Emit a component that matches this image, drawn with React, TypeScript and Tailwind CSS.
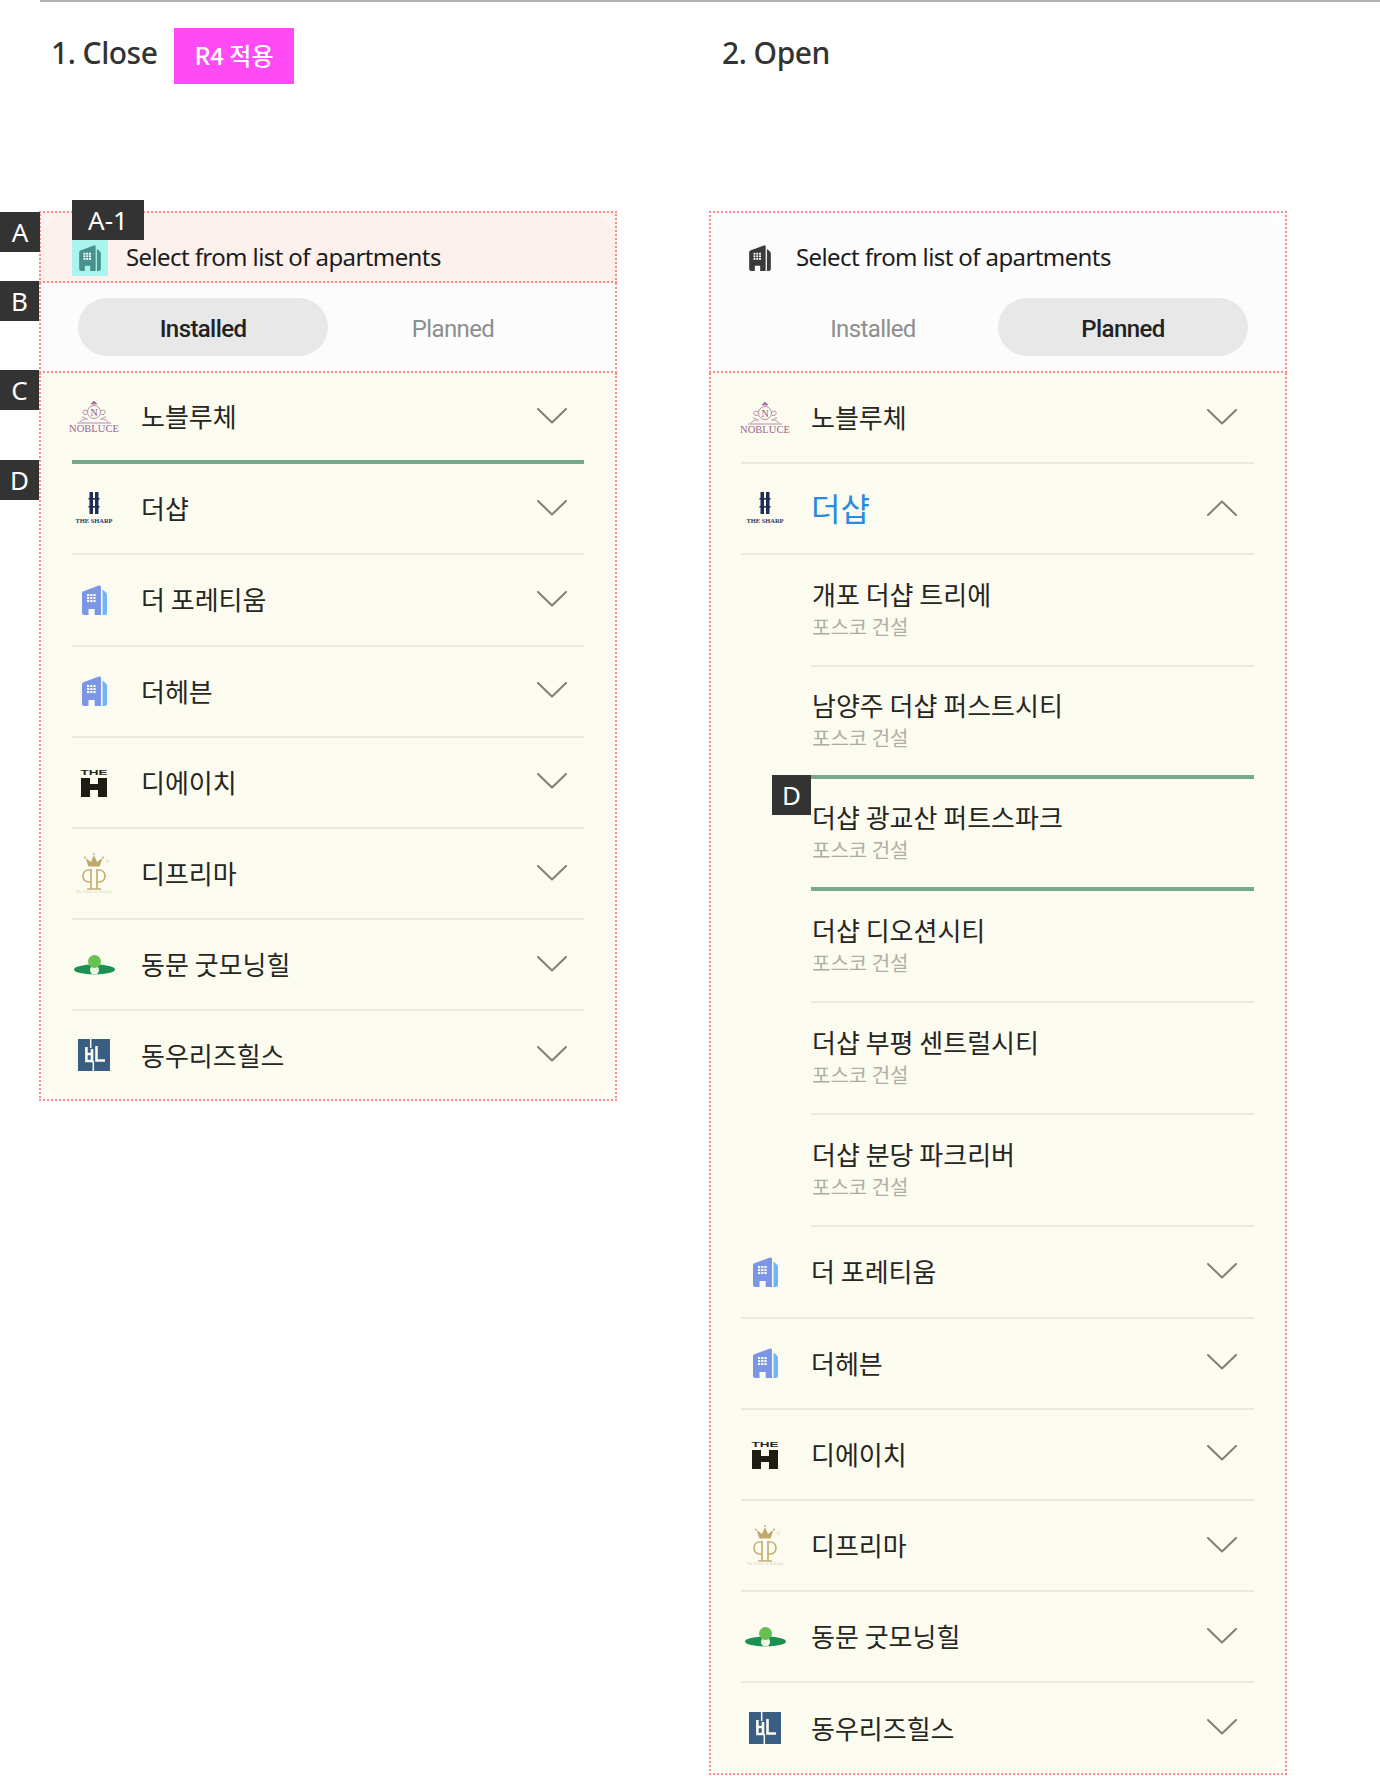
const korean = "font-['Noto_Sans_CJK_KR',sans-serif]";

function Building({ main, side, className }: { main: string; side: string; className?: string }) {
  return (
    <svg viewBox="0 0 25 30" className={className}>
      <path d="M0 8Q0 6.500 2 6L17 .5Q19 0 19 2V30H12.700V24H6.500V30H2.500Q0 30 0 27.500Z" fill={main} />
      <path d="M20.500 4.500L23.500 7Q25 8.200 25 10V27.500Q25 30 22.500 30H20.500Z" fill={side} />
      <g fill="#fff">
        {[0, 1, 2].map((r) =>
          [0, 1, 2].map((c) => <rect key={`${r}-${c}`} x={5 + c * 3.2} y={9 + r * 3} width="2.200" height="2.100" />)
        )}
      </g>
    </svg>
  );
}

function Nobluce() {
  return (
    <svg viewBox="0 0 52 34" className="w-[52px] h-[34px] shrink-0">
      <g fill="none" stroke="#a4719c" strokeWidth="0.8">
        <path d="M26 1l3 3h-6z" fill="#a4719c" />
        <circle cx="26" cy="12" r="6.500" />
        <path d="M19 11c-3-2-5 0-4 2s3 2 4 1M33 11c3-2 5 0 4 2s-3 2-4 1M12 22c2-3 5-3 8-3M40 22c-2-3-5-3-8-3M14 17c2 0 3 1 4 2M38 17c-2 0-3 1-4 2M9 23h34" />
      </g>
      <text x="26" y="15.500" textAnchor="middle" fontFamily="Liberation Serif" fontSize="10" fill="#8d5685">N</text>
      <text x="26" y="31.500" textAnchor="middle" fontFamily="Liberation Serif" fontSize="10" fill="#9a6592" textLength="50" lengthAdjust="spacingAndGlyphs">NOBLUCE</text>
    </svg>
  );
}

function Sharp() {
  return (
    <svg viewBox="0 0 44 34" className="w-[44px] h-[34px] shrink-0">
      <g fill="#1f2c58">
        <rect x="17.500" y="0" width="3.500" height="22" />
        <rect x="23" y="0" width="3.500" height="22" />
        <rect x="16.500" y="6" width="11" height="1.600" />
        <rect x="16.500" y="14" width="11" height="1.600" />
      </g>
      <text x="22" y="30.500" textAnchor="middle" fontFamily="Liberation Serif" fontWeight="700" fontSize="7" fill="#2a3560" textLength="37" lengthAdjust="spacingAndGlyphs">THE SHARP</text>
    </svg>
  );
}

function TheH() {
  return (
    <svg viewBox="0 0 28 29" className="w-[28px] h-[29px] shrink-0">
      <text x="14" y="6.500" textAnchor="middle" fontFamily="Liberation Sans" fontWeight="700" fontSize="8" fill="#26261e" textLength="27" lengthAdjust="spacingAndGlyphs">THE</text>
      <path d="M1 10H10V16H18V10H27V29H18V22H10V29H1Z" fill="#1d1d15" />
    </svg>
  );
}

function Diprima() {
  return (
    <svg viewBox="0 0 38 41" className="w-[38px] h-[41px] shrink-0">
      <path d="M10.500 5l5.500 4 3-7 3 7 5.500-4-3 8.500H13.500z" fill="#bfa86d" />
      <g fill="#bfa86d">
        <circle cx="10" cy="4.500" r="0.900" />
        <circle cx="19" cy="1" r="0.900" />
        <circle cx="28" cy="4.500" r="0.900" />
      </g>
      <circle cx="32.500" cy="8.500" r="1.200" fill="none" stroke="#d2c498" strokeWidth="0.500" />
      <g fill="none" stroke="#c4b078" strokeWidth="1.700">
        <path d="M16 16V36M22 16V36M12 36h14M16 17h-2c-8 0-8 12 0 12h2M22 17h2c8 0 8 12 0 12h-2" />
      </g>
      <text x="19" y="40" textAnchor="middle" fontFamily="Liberation Serif" fontSize="3.500" fill="#d8cda8" textLength="36">The House of Nobility</text>
    </svg>
  );
}

function Dongmoon() {
  return (
    <svg viewBox="0 0 41 20" className="w-[41px] h-[20px] shrink-0">
      <ellipse cx="20.500" cy="14.500" rx="20.500" ry="5" fill="#1a9152" />
      <circle cx="20.500" cy="15" r="4.500" fill="#f4f6e6" />
      <circle cx="20.500" cy="6.500" r="6.500" fill="#67c150" />
    </svg>
  );
}

function Dongwoo() {
  return (
    <svg viewBox="0 0 32 32" className="w-[32px] h-[32px] shrink-0">
      <rect width="32" height="32" fill="#3a5d82" />
      <g fill="none" stroke="#fbfbf0" strokeWidth="2.600">
        <path d="M8.400 8V22H14V10M8.400 15H14" />
        <path d="M18.500 7V21.500H27" />
      </g>
      <path d="M12.700 0V9M15.300 22V32" fill="none" stroke="#fbfbf0" strokeWidth="1.500" />
    </svg>
  );
}

const blueBuilding = <Building main="#7b96e4" side="#70b6f0" className="w-[25px] h-[30px] shrink-0" />;

const apartments = {
  nobluce: { name: "노블루체", logo: <Nobluce /> },
  sharp: { name: "더샵", logo: <Sharp /> },
  foretium: { name: "더 포레티움", logo: blueBuilding },
  heaven: { name: "더헤븐", logo: blueBuilding },
  dh: { name: "디에이치", logo: <TheH /> },
  diprima: { name: "디프리마", logo: <Diprima /> },
  dongmoon: { name: "동문 굿모닝힐", logo: <Dongmoon /> },
  dongwoo: { name: "동우리즈힐스", logo: <Dongwoo /> },
};

const subItems = [
  "개포 더샵 트리에",
  "남양주 더샵 퍼스트시티",
  "더샵 광교산 퍼트스파크",
  "더샵 디오션시티",
  "더샵 부평 센트럴시티",
  "더샵 분당 파크리버",
];

function Chevron({ up }: { up?: boolean }) {
  return (
    <svg viewBox="0 0 30 16" className="w-[30px] h-[16px] shrink-0">
      <path d={up ? "M1 15L15 1.500L29 15" : "M1 1L15 14.500L29 1"} fill="none" stroke="#7f7f75" strokeWidth="2" strokeLinecap="round" strokeLinejoin="round" />
    </svg>
  );
}

function Tag({ children, className }: { children: React.ReactNode; className: string }) {
  return (
    <div className={`absolute flex items-center justify-center bg-[#333333] text-white text-[26px] font-['Noto_Sans',sans-serif] ${className}`}>
      {children}
    </div>
  );
}

type RowProps = {
  item: { name: string; logo: React.ReactNode };
  open?: boolean;
  line?: string;
  height?: string;
  wide?: boolean;
};

function Row({ item, open, line = "border-b-2 border-[#e9e8dc]", height = "h-[91.2px]", wide }: RowProps) {
  return (
    <div className={`mr-[31px] flex items-center pr-[17px] ${wide ? "ml-[30px]" : "ml-[31px]"} ${height} ${line}`}>
      <div className={`flex justify-center ${wide ? "w-[48px]" : "w-[44px]"}`}>{item.logo}</div>
      <div
        className={`flex-1 ${wide ? "ml-[22px]" : "ml-[25px]"} ${korean} ${
          open ? "pb-[3px] text-[32px] text-[#2a8ae0]" : "pb-[2px] text-[26px] text-[#26261f]"
        }`}
      >
        {item.name}
      </div>
      <div className="-translate-y-px">
        <Chevron up={open} />
      </div>
    </div>
  );
}

function SubRow({ name, border, tag }: { name: string; border: string; tag?: boolean }) {
  return (
    <div className={`relative ml-[100px] mr-[31px] flex h-[112px] flex-col justify-center pl-px ${border}`}>
      {tag && <Tag className="left-[-39px] top-[-4px] h-[40px] w-[39px]">D</Tag>}
      <div className={`${korean} text-[26px] leading-[34px] text-[#26261f]`}>{name}</div>
      <div className={`${korean} text-[20px] leading-[32px] text-[#aeaea6]`}>포스코 건설</div>
    </div>
  );
}

function Tabs({ active }: { active: "Installed" | "Planned" }) {
  return (
    <div className="ml-[37px] grid w-[500px] grid-cols-2">
      {(["Installed", "Planned"] as const).map((t) => (
        <div
          key={t}
          className={`flex h-[58px] items-center justify-center rounded-full pt-[3px] font-['Roboto',sans-serif] text-[24px] tracking-[-0.6px] ${
            t === active ? "bg-[#e8e8e8] font-medium text-[#222222]" : "text-[#8e8e8e]"
          }`}
        >
          {t}
        </div>
      ))}
    </div>
  );
}

const selectText = "flex h-[36px] items-center pb-[2px] font-['Noto_Sans',sans-serif] text-[24px] tracking-[-0.6px] text-[#1c1c1c]";
const dotted = "border-[#ff8a8a]";
const heading = "font-['Noto_Sans',sans-serif] text-[30px] leading-[50px] font-medium tracking-[-0.5px] text-[#333333]";

export default function App() {
  const { nobluce, sharp, foretium, heaven, dh, diprima, dongmoon, dongwoo } = apartments;
  const rest = [foretium, heaven, dh, diprima, dongmoon];

  return (
    <div className="h-[1776px] w-[1380px] overflow-hidden bg-white">
      <div className="ml-[40px] h-[2px] bg-[#b0b0b0]" />
      <div className="flex gap-[94px] pl-[40px]">
        <div className="w-[576px]">
          <div className="flex h-[209px] items-start pl-[11px] pt-[26px]">
            <h2 className={`w-[123px] ${heading}`}>1. Close</h2>
            <div className={`flex h-[56px] w-[120px] items-center justify-center bg-[#ff4af5] pb-[2px] text-[24px] font-medium text-white ${korean}`}>R4 적용</div>
          </div>

          <div className="relative -mx-px">
            <div className={`h-[72px] border-2 border-dotted bg-[#fdf4f1] ${dotted}`}>
              <div className="flex h-full items-start rounded-t-[30px] bg-[#fbf0ec] pl-[31px] pt-[27px]">
                <div className="flex h-[36px] w-[36px] items-center justify-center bg-[#aaf3ee]">
                  <Building main="#4a918d" side="#4a918d" className="h-[26px] w-[22px]" />
                </div>
                <div className={`ml-[18px] ${selectText}`}>Select from list of apartments</div>
              </div>
            </div>
            <div className={`h-[90px] border-x-2 border-b-2 border-dotted bg-[#fcfcfc] pt-[15px] ${dotted}`}>
              <Tabs active="Installed" />
            </div>
            <div className={`border-x-2 border-b-2 border-dotted bg-[#fefef6] ${dotted}`}>
              <div className="rounded-b-[30px] bg-[#fbfbf0]">
                <Row item={nobluce} line="border-b-4 border-[#78a88e]" />
                <Row item={sharp} />
                {rest.map((r) => (
                  <Row key={r.name} item={r} />
                ))}
                <Row item={dongwoo} line="" height="h-[87.6px]" />
              </div>
            </div>
            <Tag className="left-[-39px] top-[1px] h-[40px] w-[40px]">A</Tag>
            <Tag className="left-[33px] top-[-11px] h-[40px] w-[72px]">A-1</Tag>
            <Tag className="left-[-39px] top-[70px] h-[40px] w-[39px]">B</Tag>
            <Tag className="left-[-39px] top-[159px] h-[40px] w-[39px]">C</Tag>
            <Tag className="left-[-39px] top-[249px] h-[40px] w-[39px]">D</Tag>
          </div>
        </div>

        <div className="w-[576px]">
          <div className="h-[209px] pl-[12px] pt-[26px]">
            <h2 className={heading}>2. Open</h2>
          </div>

          <div className="-mx-px">
            <div className={`h-[162px] border-2 border-dotted bg-[#fefefe] ${dotted}`}>
              <div className="h-full rounded-t-[30px] bg-[#fcfcfc]">
                <div className="flex items-center pl-[38px] pt-[27px]">
                  <Building main="#3a3a3a" side="#3a3a3a" className="h-[26px] w-[22px]" />
                  <div className={`ml-[25px] ${selectText}`}>Select from list of apartments</div>
                </div>
                <div className="pt-[22px]">
                  <Tabs active="Planned" />
                </div>
              </div>
            </div>
            <div className={`border-x-2 border-b-2 border-dotted bg-[#fefef6] ${dotted}`}>
              <div className="rounded-b-[30px] bg-[#fbfbf0]">
                <Row item={nobluce} wide />
                <Row item={sharp} open wide />
                {subItems.map((s, i) => (
                  <SubRow
                    key={s}
                    name={s}
                    tag={i === 2}
                    border={i === 1 || i === 2 ? "border-b-4 border-[#78a88e]" : "border-b-2 border-[#e9e8dc]"}
                  />
                ))}
                {rest.map((r) => (
                  <Row key={r.name} item={r} wide />
                ))}
                <Row item={dongwoo} line="" height="h-[89.6px]" wide />
              </div>
            </div>
          </div>
        </div>
      </div>
    </div>
  );
}
